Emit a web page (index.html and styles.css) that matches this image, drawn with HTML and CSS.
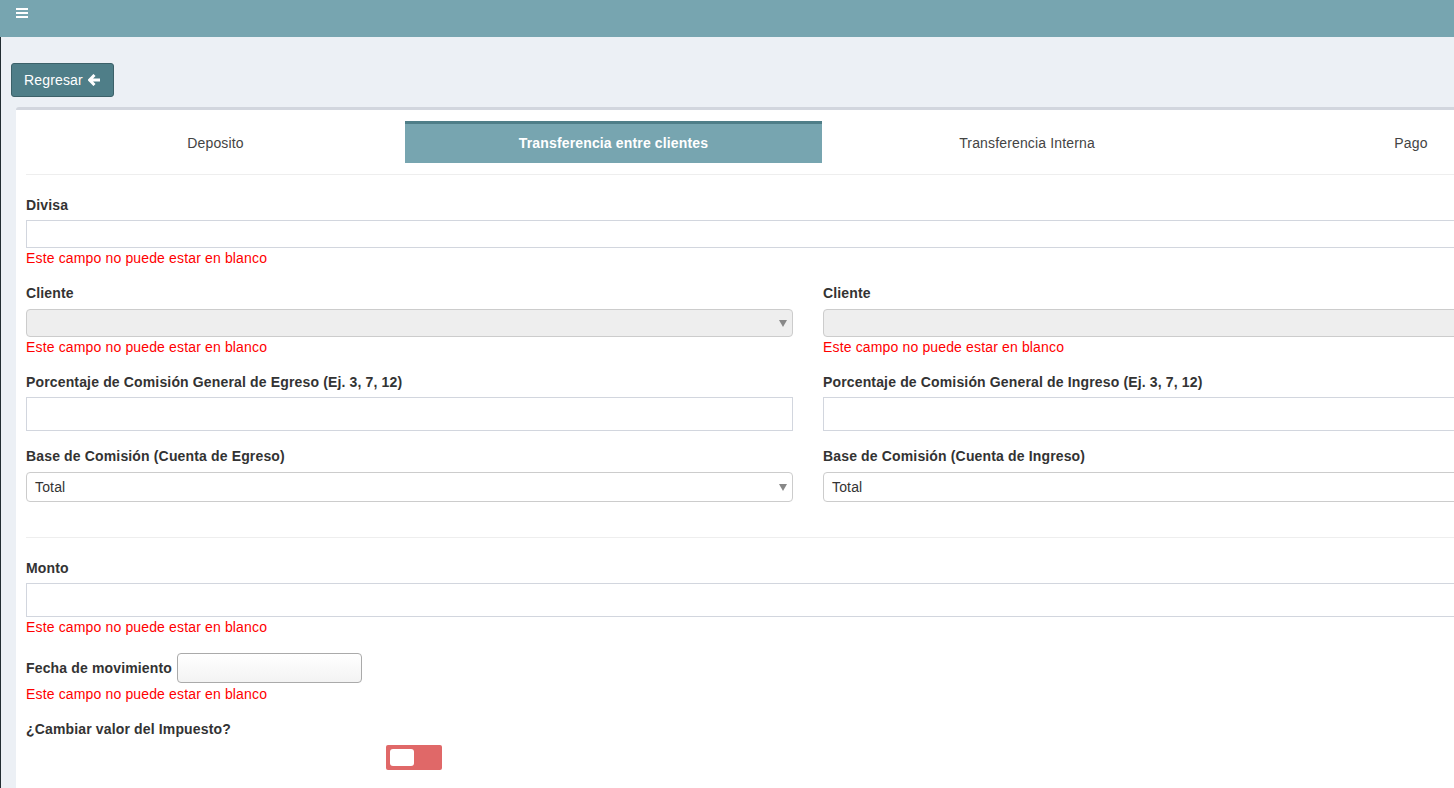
FILE: index.html
```html
<!DOCTYPE html>
<html lang="es">
<head>
<meta charset="utf-8">
<title>Movimientos</title>
<link rel="stylesheet" href="styles.css">
</head>
<body>
<header class="topbar">
  <span class="burger"><i></i><i></i><i></i></span>
</header>
<main class="content">
  <div class="toolbar">
    <button class="btn-back">Regresar
      <svg class="arrow" width="13" height="12" viewBox="0 0 13 12"><path d="M6.5 1 L1.5 6 L6.5 11 M1.8 6 H12" fill="none" stroke="#fff" stroke-width="3" stroke-linejoin="miter"/></svg>
    </button>
  </div>
  <section class="card">
    <nav class="tabs">
      <a class="tab t1">Deposito</a>
      <a class="tab t2 active">Transferencia entre clientes</a>
      <a class="tab t3">Transferencia Interna</a>
      <a class="tab t4">Pago</a>
    </nav>
    <form class="form">
      <div class="group">
        <label class="lbl">Divisa</label>
        <input class="field f28" type="text">
        <div class="err">Este campo no puede estar en blanco</div>
      </div>
      <div class="row">
        <div class="col">
          <div class="group">
            <label class="lbl">Cliente</label>
            <div class="select disabled"><span class="caret"></span></div>
            <div class="err">Este campo no puede estar en blanco</div>
          </div>
          <div class="group">
            <label class="lbl">Porcentaje de Comisión General de Egreso (Ej. 3, 7, 12)</label>
            <input class="field f34" type="text">
          </div>
          <div class="group">
            <label class="lbl">Base de Comisión (Cuenta de Egreso)</label>
            <div class="select s30">Total<span class="caret"></span></div>
          </div>
        </div>
        <div class="col">
          <div class="group">
            <label class="lbl">Cliente</label>
            <div class="select disabled"><span class="caret"></span></div>
            <div class="err">Este campo no puede estar en blanco</div>
          </div>
          <div class="group">
            <label class="lbl">Porcentaje de Comisión General de Ingreso (Ej. 3, 7, 12)</label>
            <input class="field f34" type="text">
          </div>
          <div class="group">
            <label class="lbl">Base de Comisión (Cuenta de Ingreso)</label>
            <div class="select s30">Total<span class="caret"></span></div>
          </div>
        </div>
      </div>
      <hr class="sep">
      <div class="group">
        <label class="lbl">Monto</label>
        <input class="field f34" type="text">
        <div class="err">Este campo no puede estar en blanco</div>
      </div>
      <div class="group">
        <div class="inline">
          <label class="lbl-inline">Fecha de movimiento</label>
          <input class="date" type="text">
        </div>
        <div class="err">Este campo no puede estar en blanco</div>
      </div>
      <div class="group">
        <label class="lbl">¿Cambiar valor del Impuesto?</label>
        <span class="toggle"><span class="knob"></span></span>
      </div>
    </form>
  </section>
</main>
</body>
</html>
```

FILE: styles.css
```css
* { box-sizing: border-box; }
html, body { margin: 0; padding: 0; }
body {
  font-family: "Liberation Sans", Arial, sans-serif;
  font-size: 14px;
  line-height: 20px;
  letter-spacing: 0.15px;
  color: #333;
  background: #ecf0f5;
  overflow: hidden;
  width: 1454px;
  height: 788px;
}
.topbar {
  height: 37px;
  background: #77a5b0;
  padding: 8px 0 0 16px;
}
.burger { display: flex; flex-direction: column; gap: 2px; width: 12px; }
.burger i { display: block; height: 2px; background: #fff; }

.content {
  border-left: 1px solid #222d32;
  height: 751px;
  width: 1700px;
}
.toolbar { padding: 26px 10px 10px; }
.btn-back {
  display: inline-flex;
  align-items: center;
  gap: 5px;
  height: 34px;
  padding: 0 12px;
  background: #4f7e88;
  border: 1px solid #3c6169;
  border-radius: 3px;
  color: #fff;
  font-family: "Liberation Sans", Arial, sans-serif;
  font-size: 14px;
  letter-spacing: 0.15px;
}
.arrow { display: block; }

.card {
  margin-left: 15px;
  width: 1584px;
  background: #fff;
  border-top: 3px solid #d2d6de;
  border-radius: 3px 3px 0 0;
  padding: 11px 10px 20px;
  min-height: 700px;
}
.tabs {
  display: flex;
  padding-bottom: 11px;
  border-bottom: 1px solid #eee;
}
.tab {
  height: 42px;
  display: flex;
  align-items: center;
  justify-content: center;
  color: #444;
  border-top: 3px solid transparent;
  padding-bottom: 2px;
}
.t1 { width: 379px; }
.t2 { width: 417px; }
.t3 { width: 410px; }
.t4 { width: 358px; }
.tab.active {
  background: #77a5b0;
  border-top-color: #4f7e88;
  color: #fff;
  font-weight: bold;
}

.form { padding-top: 20px; }
.group {
  display: flex;
  flex-direction: column;
  margin-bottom: 15px;
}
.lbl { display: block; font-weight: bold; margin-bottom: 5px; }
.field {
  display: block;
  width: 100%;
  border: 1px solid #d2d6de;
  background: #fff;
  padding: 6px 12px;
  font: inherit;
}
.f28 { height: 28px; }
.f34 { height: 34px; }
.err { color: #f00; }

.row { display: flex; gap: 30px; }
.col { width: 767px; }

.select {
  position: relative;
  height: 28px;
  margin-top: 1px;
  border: 1px solid #ccc;
  border-radius: 4px;
  background: #fff;
  padding: 0 8px;
  display: flex;
  align-items: center;
}
.select.disabled { background: #eee; }
.select.s30 { height: 30px; }
.caret {
  position: absolute;
  right: 5px;
  top: 50%;
  margin-top: -3px;
  border-left: 4px solid transparent;
  border-right: 4px solid transparent;
  border-top: 7px solid #888;
}

.sep {
  border: 0;
  border-top: 1px solid #eee;
  margin: 20px 0;
}

.inline { display: flex; align-items: center; gap: 5px; padding: 1px 0; }
.lbl-inline { font-weight: bold; }
.date {
  width: 185px;
  height: 30px;
  border: 1px solid #aaa;
  border-radius: 4px;
  background: linear-gradient(#fff, #f3f3f3);
}

.toggle {
  display: block;
  align-self: flex-start;
  margin-top: 1px;
  margin-left: 360px;
  width: 56px;
  height: 25px;
  background: #e06868;
  border-radius: 2px;
  padding: 4px;
}
.knob {
  display: block;
  width: 24px;
  height: 17px;
  background: #fff;
  border-radius: 3px;
}
```
